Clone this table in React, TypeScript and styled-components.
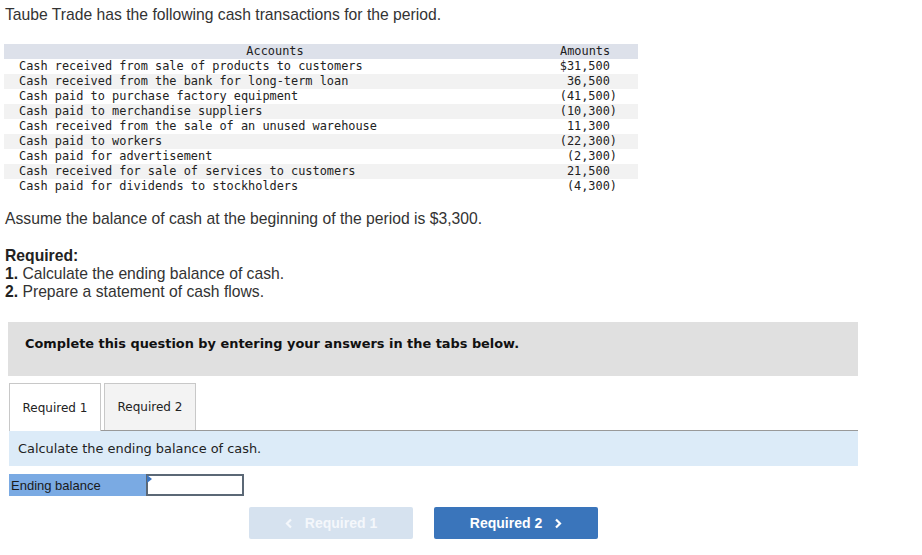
import React from "react";
import styled, { createGlobalStyle } from "styled-components";

const Global = createGlobalStyle`
  html, body { margin: 0; padding: 0; background: #fff; }
  body { font-family: "Liberation Sans", Arial, sans-serif; color: #333; }
`;

const Page = styled.div`
  width: 922px;
  padding: 6px 0 0 5px;
  box-sizing: border-box;
`;

const Para = styled.p<{ $mt?: number }>`
  margin: ${(p) => p.$mt ?? 0}px 0 0 0;
  font-family: "Liberation Sans", Arial, sans-serif;
  font-size: 15.7px;
  line-height: 18px;
  color: #333;
`;

const Bold = styled.b`
  font-weight: 700;
  color: #222;
`;

const Table = styled.table`
  margin: 20px 0 0 -1px;
  width: 634px;
  table-layout: fixed;
  border-collapse: collapse;
  font-family: "DejaVu Sans Mono", "Liberation Mono", monospace;
  font-size: 11.9px;
  color: #222;
`;

const Col = styled.col<{ $w: number }>`
  width: ${(p) => p.$w}px;
`;

const Th = styled.th<{ $align: "center" | "left"; $pl?: number }>`
  background: #dde1ea;
  font-weight: 400;
  height: 15px;
  padding: 0 0 0 ${(p) => p.$pl ?? 0}px;
  line-height: 15px;
  text-align: ${(p) => p.$align};
`;

const Tr = styled.tr<{ $alt: boolean }>`
  background: ${(p) => (p.$alt ? "#f2f2f2" : "#fff")};
`;

const TdAcc = styled.td`
  padding: 0 0 0 15px;
  height: 15px;
  line-height: 15px;
  white-space: pre;
`;

const TdAmt = styled.td`
  padding: 0 21px 0 0;
  height: 15px;
  line-height: 15px;
  text-align: right;
  white-space: pre;
`;

const Banner = styled.div`
  margin: 21px 0 0 3px;
  width: 850px;
  height: 54px;
  background: #e0e0e0;
  padding: 14px 0 0 17px;
  box-sizing: border-box;
  font-family: "DejaVu Sans", Verdana, sans-serif;
  font-weight: 700;
  font-size: 12.9px;
  line-height: 16px;
  color: #111;
`;

const Tabs = styled.div`
  margin: 7px 0 0 4px;
  width: 849px;
  display: flex;
  gap: 3px;
  border-bottom: 1px solid #999;
`;

const Tab = styled.div<{ $active?: boolean }>`
  width: 92px;
  box-sizing: border-box;
  border: 1px solid #c8c8c8;
  border-bottom: none;
  background: ${(p) => (p.$active ? "#fff" : "#f3f3f3")};
  display: flex;
  align-items: center;
  justify-content: center;
  font-family: "DejaVu Sans", Verdana, sans-serif;
  font-size: 12px;
  color: #222;
  margin-bottom: ${(p) => (p.$active ? "-1px" : "0")};
  height: ${(p) => (p.$active ? "48px" : "47px")};
`;

const Instruction = styled.div`
  margin-left: 4px;
  width: 849px;
  height: 35px;
  background: #dcebf8;
  display: flex;
  align-items: center;
  padding-left: 9px;
  box-sizing: border-box;
  font-family: "DejaVu Sans", Verdana, sans-serif;
  font-size: 12.9px;
  color: #222;
`;

const Entry = styled.div`
  margin: 8px 0 0 4px;
  display: flex;
  height: 22px;
`;

const Label = styled.div`
  width: 137px;
  background: #7aaae3;
  display: flex;
  align-items: center;
  padding-left: 2px;
  box-sizing: border-box;
  font-family: "Liberation Sans", Arial, sans-serif;
  font-size: 13px;
  color: #1a1a1a;
`;

const InputWrap = styled.div`
  position: relative;
  width: 98px;
  height: 22px;
  box-sizing: border-box;
  border: 2px solid #5b6876;
  background: #fff;
`;

const Notch = styled.span`
  position: absolute;
  left: -1px;
  top: -1px;
  width: 0;
  height: 0;
  border-top: 4px solid transparent;
  border-bottom: 4px solid transparent;
  border-left: 5px solid #3a74c0;
`;

const Nav = styled.div`
  margin: 11px 0 0 244px;
  display: flex;
  gap: 21px;
`;

const NavButton = styled.button<{ $disabled?: boolean }>`
  width: 164px;
  height: 32px;
  border: none;
  border-radius: 2px;
  background: ${(p) => (p.$disabled ? "#d6e2ef" : "#3a75bb")};
  color: ${(p) => (p.$disabled ? "#f4f7fb" : "#fff")};
  font-family: "Liberation Sans", Arial, sans-serif;
  font-weight: 700;
  font-size: 14px;
  display: flex;
  align-items: center;
  justify-content: center;
  gap: 12px;
  padding: 0;
  cursor: pointer;
`;

const Chevron = ({ dir }: { dir: "left" | "right" }) => (
  <svg width="8" height="11" viewBox="0 0 8 11">
    <path
      d={dir === "left" ? "M6 1.5 L2 5.5 L6 9.5" : "M2 1.5 L6 5.5 L2 9.5"}
      fill="none"
      stroke="currentColor"
      strokeWidth="2.2"
    />
  </svg>
);

const rows: [string, string][] = [
  ["Cash received from sale of products to customers", "$31,500 "],
  ["Cash received from the bank for long-term loan", "36,500 "],
  ["Cash paid to purchase factory equipment", "(41,500)"],
  ["Cash paid to merchandise suppliers", "(10,300)"],
  ["Cash received from the sale of an unused warehouse", "11,300 "],
  ["Cash paid to workers", "(22,300)"],
  ["Cash paid for advertisement", "(2,300)"],
  ["Cash received for sale of services to customers", "21,500 "],
  ["Cash paid for dividends to stockholders", "(4,300)"],
];

export default function App() {
  return (
    <Page>
      <Global />
      <Para>Taube Trade has the following cash transactions for the period.</Para>
      <Table>
        <colgroup>
          <Col $w={542} />
          <Col $w={92} />
        </colgroup>
        <thead>
          <tr>
            <Th $align="center">Accounts</Th>
            <Th $align="left" $pl={14}>Amounts</Th>
          </tr>
        </thead>
        <tbody>
          {rows.map(([a, v], i) => (
            <Tr key={i} $alt={i % 2 === 1}>
              <TdAcc>{a}</TdAcc>
              <TdAmt>{v}</TdAmt>
            </Tr>
          ))}
        </tbody>
      </Table>
      <Para $mt={16}>Assume the balance of cash at the beginning of the period is $3,300.</Para>
      <Para $mt={19}>
        <Bold>Required:</Bold>
      </Para>
      <Para>
        <Bold>1.</Bold> Calculate the ending balance of cash.
      </Para>
      <Para>
        <Bold>2.</Bold> Prepare a statement of cash flows.
      </Para>
      <Banner>Complete this question by entering your answers in the tabs below.</Banner>
      <Tabs>
        <Tab $active>Required 1</Tab>
        <Tab>Required 2</Tab>
      </Tabs>
      <Instruction>Calculate the ending balance of cash.</Instruction>
      <Entry>
        <Label>Ending balance</Label>
        <InputWrap>
          <Notch />
        </InputWrap>
      </Entry>
      <Nav>
        <NavButton $disabled>
          <Chevron dir="left" />
          Required 1
        </NavButton>
        <NavButton>
          Required 2
          <Chevron dir="right" />
        </NavButton>
      </Nav>
    </Page>
  );
}
